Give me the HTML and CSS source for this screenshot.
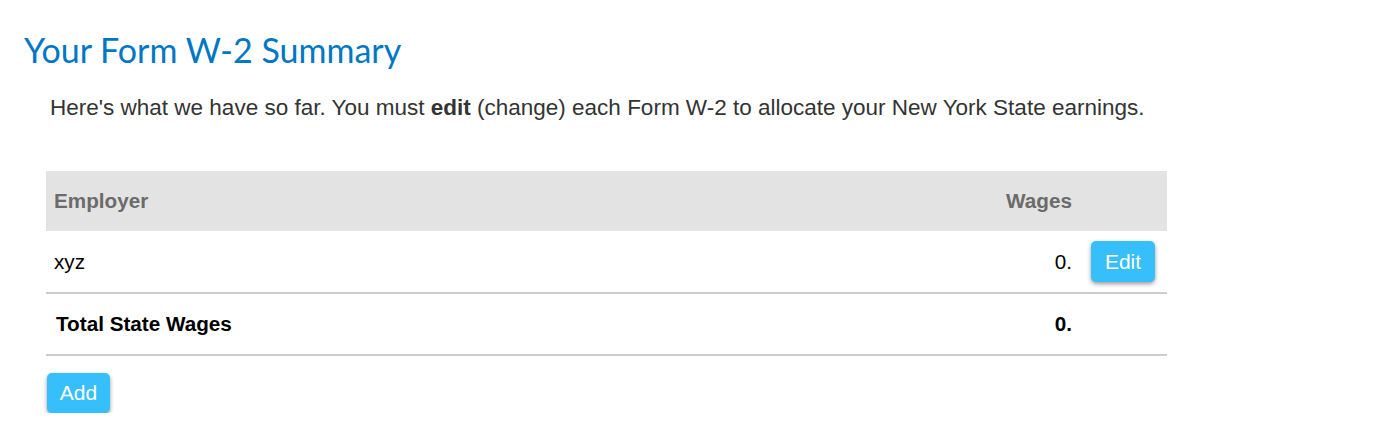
FILE: index.html
```html
<!DOCTYPE html>
<html lang="en">
<head>
    <meta charset="UTF-8" />
    <title>Your Form W-2 Summary</title>
    <link rel="stylesheet" href="styles.css">
</head>
<body>
    <h1 class="title">Your Form W-2 Summary</h1>
    <div class="content">
        <p class="intro">Here's what we have so far. You must <b>edit</b> (change) each Form W-2 to allocate your New York State earnings.</p>
        <table class="summary">
            <thead>
                <tr>
                    <th class="col-name">Employer</th>
                    <th class="col-wages">Wages</th>
                    <th class="col-action"></th>
                </tr>
            </thead>
            <tbody>
                <tr>
                    <td class="col-name">xyz</td>
                    <td class="col-wages">0.</td>
                    <td class="col-action"><button class="btn">Edit</button></td>
                </tr>
                <tr class="total">
                    <td class="col-name">Total State Wages</td>
                    <td class="col-wages">0.</td>
                    <td class="col-action"></td>
                </tr>
            </tbody>
        </table>
        <button class="btn add">Add</button>
    </div>
</body>
</html>
```

FILE: styles.css
```css
*{
    margin: 0;
    padding: 0;
    box-sizing: border-box;
}
body{
    font-family: "Liberation Sans", Arial, sans-serif;
    color: #333;
    padding: 30px 24px 0 24px;
}
.title{
    font-family: Lato, "Open Sans", sans-serif;
    font-weight: normal;
    font-size: 34px;
    line-height: 40px;
    color: #0077c5;
}
.content{
    padding-left: 22px;
    width: 1143px;
}
.intro{
    font-size: 22.5px;
    line-height: 28px;
    margin: 24px 0 49px 4px;
}
.summary{
    width: 100%;
    border-collapse: collapse;
    font-size: 20.7px;
    color: #000;
}
.summary th{
    background: #e3e3e3;
    color: #6b6b6b;
    font-weight: bold;
    height: 60px;
    text-align: left;
}
.summary td{
    height: 62px;
    border-bottom: 2px solid #ccc;
}
.col-name{
    padding-left: 8px;
}
.col-wages{
    text-align: right !important;
}
.col-action{
    width: 95px;
    padding-left: 19px;
}
.total td{
    font-weight: bold;
}
.total .col-name{
    padding-left: 10px;
}
.btn{
    font-family: "Liberation Sans", Arial, sans-serif;
    font-size: 21px;
    color: #fff;
    background: #36bffa;
    border: none;
    border-radius: 5px;
    box-shadow: 0 2px 4px rgba(0,0,0,0.4);
    height: 41px;
    width: 64px;
    cursor: pointer;
}
.add{
    margin-top: 17px;
    margin-left: 1px;
    width: 63px;
    height: 40px;
}
```
